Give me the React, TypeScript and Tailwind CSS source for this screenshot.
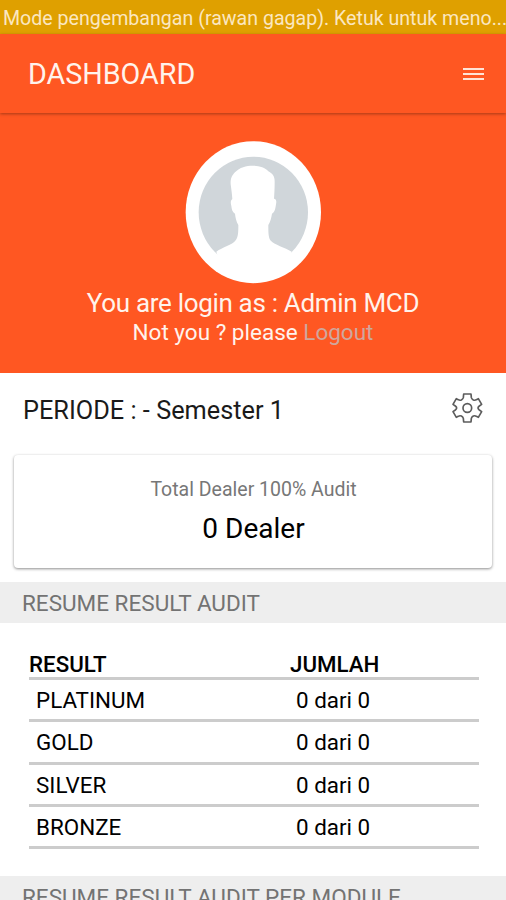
import { clsx } from 'clsx';

const results = [
  { label: 'PLATINUM', total: '0 dari 0' },
  { label: 'GOLD', total: '0 dari 0' },
  { label: 'SILVER', total: '0 dari 0' },
  { label: 'BRONZE', total: '0 dari 0' },
];

function Avatar() {
  return (
    <svg width="136" height="143" viewBox="0 0 408 429" aria-hidden="true">
      <ellipse cx="205" cy="213.5" rx="203" ry="213" fill="#fff" />
      <ellipse cx="205" cy="214" rx="164" ry="167" fill="#d0d6da" />
      <path
        fill="#fff"
        d="M94 332 C112 319 142 312 152 298 C160 288 160 272 160 252 C154 242 151 228 150 218 C142 214 140 204 139 195 C136 184 137 178 142 174 C141 158 139 146 137 130 C136 112 141 104 150 94 C164 79 184 74 203 74 C222 74 240 79 250 91 C264 98 269 107 269 122 C269 142 268 158 267 173 C274 174 275 180 273 190 C271 204 269 214 261 218 C259 230 256 242 250 252 C250 272 250 288 256 298 C268 312 300 320 320 332 L302 378 L205 400 L108 378 Z"
      />
    </svg>
  );
}

function GearIcon() {
  return (
    <svg width="35" height="34" viewBox="0 0 105 102" fill="none" stroke="#5c5c5c" strokeWidth="5" strokeLinejoin="round" aria-hidden="true">
      <path d="M41 9 H63 L64 20 Q65 24 70 27 Q75 29 79 26 L85 23 L95 40 L88 45 Q84 48 84 51 Q84 54 88 57 L95 62 L85 79 L79 76 Q75 73 70 75 Q65 78 64 82 L63 93 H41 L40 82 Q39 78 34 75 Q29 73 25 76 L19 79 L9 62 L16 57 Q20 54 20 51 Q20 48 16 45 L9 40 L19 23 L25 26 Q29 29 34 27 Q39 24 40 20 Z" />
      <circle cx="52" cy="51" r="13" />
    </svg>
  );
}

function SectionTitle({ children, className }: { children: string; className?: string }) {
  return (
    <h2 className={clsx('flex h-[41px] shrink-0 items-center bg-[#eeeeee] pt-[2px] pl-[22px] text-[22.5px] whitespace-nowrap text-[#737373]', className)}>
      {children}
    </h2>
  );
}

export default function App() {
  return (
    <div className="flex h-[900px] w-[506px] flex-col overflow-hidden bg-white font-['Roboto',sans-serif] text-black">
      {/* Development mode warning */}
      <div className="h-[34px] shrink-0 bg-[#dfa000] pl-[3px] text-[19.6px] leading-[37px] whitespace-nowrap text-[#fbe7c0]">
        Mode pengembangan (rawan gagap). Ketuk untuk meno...
      </div>

      {/* App bar */}
      <header className="z-10 flex h-[79px] shrink-0 items-center justify-between bg-[#ff5722] pr-[22px] pl-[28px] shadow-[0_1px_3px_rgba(0,0,0,0.35)]">
        <h1 className="pt-[2px] text-[28.7px] text-[#fff3ec]">DASHBOARD</h1>
        <div className="flex w-[21px] flex-col gap-[3px]">
          <span className="h-[2px] bg-[#ffe3d6]" />
          <span className="h-[2px] bg-[#ffe3d6]" />
          <span className="h-[2px] bg-[#ffe3d6]" />
        </div>
      </header>

      {/* Profile */}
      <section className="flex h-[260px] shrink-0 flex-col items-center bg-[#ff5722] pt-[28px] text-[#fff3ec]">
        <Avatar />
        <p className="mt-[3px] text-[26px] leading-[32px] tracking-[-0.32px]">You are login as : Admin MCD</p>
        <p className="text-[22.5px] leading-[26px]">
          Not you ? please <a className="text-[#cfa79d]">Logout</a>
        </p>
      </section>

      {/* Period */}
      <div className="flex h-[82px] shrink-0 items-start justify-between pt-[18px] pr-[21px] pl-[23px]">
        <p className="text-[25.3px] leading-[40px] text-[#1a1a1a]">PERIODE : - Semester 1</p>
        <GearIcon />
      </div>

      <div className="mx-[14px] flex h-[113px] shrink-0 flex-col items-center rounded-[4px] bg-white pt-[21px] pl-px shadow-[0_1px_3px_rgba(0,0,0,0.45)]">
        <p className="text-[19.5px] leading-[28px] text-[#777]">Total Dealer 100% Audit</p>
        <p className="mt-[6px] text-[28px] leading-[38px]">0 Dealer</p>
      </div>

      <SectionTitle className="mt-[14px]">RESUME RESULT AUDIT</SectionTitle>

      <div className="mx-[29px] mt-[28px] flex w-[450px] shrink-0 flex-col">
        <div className="flex h-[29px] border-b-3 border-[#cccccc] text-[22.3px] leading-[27px] font-medium">
          <span className="w-[261px]">RESULT</span>
          <span>JUMLAH</span>
        </div>
        {results.map((row) => (
          <div key={row.label} className="flex h-[42.25px] border-b-3 border-[#cccccc] pl-[7px] text-[22.4px] leading-[40px]">
            <span className="w-[260px]">{row.label}</span>
            <span>{row.total}</span>
          </div>
        ))}
      </div>

      <SectionTitle className="mt-[27px]">RESUME RESULT AUDIT PER MODULE</SectionTitle>
    </div>
  );
}
